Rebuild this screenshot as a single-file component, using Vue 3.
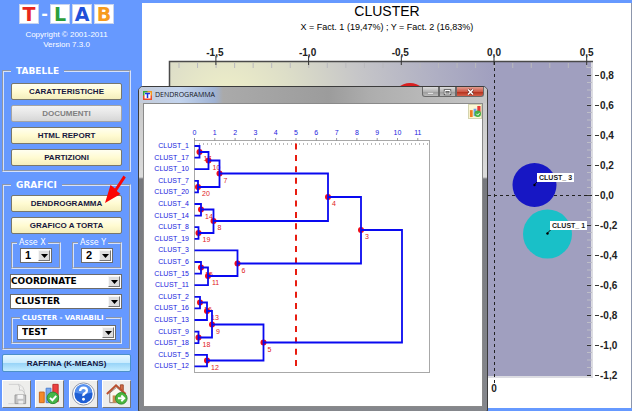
<script setup>
import { ref } from 'vue'

const tiles = [
  { c: 'T', k: 'red' },
  { c: 'L', k: 'green' },
  { c: 'A', k: 'blue' },
  { c: 'B', k: 'orange' }
]
const tables = ['CARATTERISTICHE', 'DOCUMENTI', 'HTML REPORT', 'PARTIZIONI']
const axisX = ref('1')
const axisY = ref('2')
const mode = ref('COORDINATE')
const kind = ref('CLUSTER')
const variable = ref('TEST')

// Scatter plot scales
const sx = (v) => 494 + v * 185.4
const sy = (v) => 195 - v * 150
const xTicks = [-1.5, -1, -0.5, 0, 0.5]
const yTicks = [0.8, 0.6, 0.4, 0.2, 0, -0.2, -0.4, -0.6, -0.8, -1, -1.2]
const fmt = (v) => v.toFixed(1).replace('.', ',')
const xMinor = Array.from({ length: 23 }, (_, i) => 179 + i * 18.54)
const yMinor = Array.from({ length: 41 }, (_, i) => 67.5 + i * 7.5)

// Dendrogram
const leaves = [1, 17, 10, 7, 20, 4, 14, 8, 19, 3, 6, 15, 11, 2, 16, 13, 9, 18, 5, 12]
const ly = (i) => 146 + i * 11.6
const dx = (v) => 194.5 + v * 20.3
const x0 = 194.5
// [label, x, y, top branch x, top branch y, bottom branch x, bottom branch y]
const nodes = [
  [17, 199.5, 152, x0, ly(0), x0, ly(1)],
  [10, 208.5, 160.5, 199.5, 152, x0, ly(2)],
  [20, 198, 187, x0, ly(3), x0, ly(4)],
  [7, 219.5, 173.5, 208.5, 160.5, 198, 187],
  [14, 201, 209.5, x0, ly(5), x0, ly(6)],
  [19, 198.5, 233, x0, ly(7), x0, ly(8)],
  [8, 213.5, 221, 201, 209.5, 198.5, 233],
  [4, 328, 197, 219.5, 173.5, 213.5, 221],
  [15, 201, 267.5, x0, ly(10), x0, ly(11)],
  [11, 208, 276, 201, 267.5, x0, ly(12)],
  [6, 237.5, 263.5, x0, ly(9), 208, 276],
  [3, 361, 230, 328, 197, 237.5, 263.5],
  [16, 200, 302.5, x0, ly(13), x0, ly(14)],
  [13, 207, 311, 200, 302.5, x0, ly(15)],
  [18, 198.5, 337.5, x0, ly(16), x0, ly(17)],
  [9, 212, 324.5, 207, 311, 198.5, 337.5],
  [12, 207, 360.5, x0, ly(18), x0, ly(19)],
  [5, 263.5, 342.5, 212, 324.5, 207, 360.5],
  [2, 402, 286, 361, 230, 263.5, 342.5]
]
const path = (n) => `M${n[3]} ${n[4]}H${n[1]}V${n[6]}H${n[5]}`
</script>

<template>
  <div class="app">
    <aside class="side">
      <header class="brand">
        <div class="logo">
          <template v-for="(t, i) in tiles" :key="t.c">
            <span class="tile" :class="t.k">{{ t.c }}</span>
            <span v-if="i === 0" class="dash">-</span>
          </template>
        </div>
        <p>Copyright © 2001-2011</p>
        <p>Version 7.3.0</p>
      </header>

      <fieldset class="group">
        <legend>TABELLE</legend>
        <button v-for="t in tables" :key="t" type="button" class="btn" :disabled="t === 'DOCUMENTI'">{{ t }}</button>
      </fieldset>

      <fieldset class="group charts">
        <legend>GRAFICI</legend>
        <button type="button" class="btn">
          DENDROGRAMMA
          <svg class="pointer" viewBox="0 0 22 29" aria-hidden="true">
            <path d="M19.500 0.500L11 13.500L6.500 10L1 28L16.500 19L12.800 16L21.800 2.500Z" fill="#fb0505" />
          </svg>
        </button>
        <button type="button" class="btn">GRAFICO A TORTA</button>
        <div class="axes">
          <fieldset class="mini">
            <legend><label for="ax">Asse X</label></legend>
            <div class="pick big">
              <select id="ax" v-model="axisX"><option>1</option><option>2</option></select>
              <span class="drop"><svg viewBox="0 0 7 4"><path d="M0 0h7L3.500 4z" /></svg></span>
            </div>
          </fieldset>
          <fieldset class="mini">
            <legend><label for="ay">Asse Y</label></legend>
            <div class="pick big">
              <select id="ay" v-model="axisY"><option>1</option><option>2</option></select>
              <span class="drop"><svg viewBox="0 0 7 4"><path d="M0 0h7L3.500 4z" /></svg></span>
            </div>
          </fieldset>
        </div>
        <div class="pick wide tight">
          <select v-model="mode" aria-label="Coordinate"><option>COORDINATE</option></select>
          <span class="drop"><svg viewBox="0 0 7 4"><path d="M0 0h7L3.500 4z" /></svg></span>
        </div>
        <div class="pick wide">
          <select v-model="kind" aria-label="Cluster"><option>CLUSTER</option></select>
          <span class="drop"><svg viewBox="0 0 7 4"><path d="M0 0h7L3.500 4z" /></svg></span>
        </div>
        <fieldset class="mini vars">
          <legend><label for="va">CLUSTER - VARIABILI</label></legend>
          <div class="pick">
            <select id="va" v-model="variable"><option>TEST</option></select>
            <span class="drop"><svg viewBox="0 0 7 4"><path d="M0 0h7L3.500 4z" /></svg></span>
          </div>
        </fieldset>
      </fieldset>

      <button type="button" class="btn refine">RAFFINA (K-MEANS)</button>

      <nav class="tools">
        <button type="button" class="tool" aria-label="Salva" disabled>
          <svg viewBox="0 0 28 27">
            <path d="M6 3.500h10q6 1 6.500 10M5.500 23.500h7" fill="none" stroke="#d0d0d0" />
            <path d="M16 3.500q2 3 1 6q4-1 5.500 4" fill="#f8f8f8" stroke="#c4c4c4" />
            <path d="M12.500 14.500h11v9h-11z" fill="#c4c4c4" stroke="#999" />
            <path d="M15 14.500h6v4h-6z" fill="#f4f4f4" /><path d="M16 20.500h5v3h-5z" fill="#eee" />
          </svg>
        </button>
        <button type="button" class="tool" aria-label="Grafico">
          <svg viewBox="0 0 28 27">
            <path d="M3.500 11.500h5v11h-5z" fill="#f58a2a" stroke="#c8641a" />
            <path d="M10.500 7.500h5v15h-5z" fill="#7aaaf0" stroke="#4c7fd0" />
            <path d="M17.500 3.500h5.500v18h-5.500z" fill="#ec4040" stroke="#bd2b2b" />
            <circle cx="17.500" cy="17.500" r="6" fill="#45b648" stroke="#2a8c30" />
            <path d="M14.500 17.500l2.500 2.500L21 15.500" fill="none" stroke="#fff" stroke-width="2" />
          </svg>
        </button>
        <button type="button" class="tool" aria-label="Aiuto">
          <svg viewBox="0 0 28 27">
            <circle cx="14" cy="13.500" r="11.500" fill="#fff" stroke="#8a94a8" />
            <circle cx="14" cy="13.500" r="9.500" fill="#1f5fd4" />
            <path d="M5 12a9 9 0 0 1 18 0q-9 3-18 0" fill="#5590ee" />
            <path d="M10.500 10.500q0-3.500 3.500-3.500t3.500 3q0 1.500-2 2.700t-1.500 2.800" fill="none" stroke="#fff" stroke-width="2.400" />
            <circle cx="14" cy="19" r="1.500" fill="#fff" />
          </svg>
        </button>
        <button type="button" class="tool" aria-label="Home">
          <svg viewBox="0 0 28 27">
            <path d="M18 4h3v6h-3z" fill="#d46e48" stroke="#9c4a2e" />
            <path d="M7 12.500v10h14v-10l-7-6z" fill="#fdf8f0" stroke="#8b7a70" />
            <path d="M4 13.500L13.500 4.500L23.500 13.500" fill="none" stroke="#b9502f" stroke-width="2" />
            <path d="M10 15h4v7.500h-4z" fill="#c98a50" />
            <circle cx="19" cy="18" r="6" fill="#4cb83f" stroke="#2b8a28" />
            <path d="M15.500 18h6M19 15l3 3l-3 3" fill="none" stroke="#fff" stroke-width="2" />
          </svg>
        </button>
      </nav>
    </aside>

    <main class="main">
      <svg class="scatter" viewBox="142 3 489 404" role="img" aria-label="Cluster">
        <defs>
          <radialGradient id="bg" gradientUnits="userSpaceOnUse" cx="226" cy="105" r="270">
            <stop offset="0" stop-color="#f1f1c8" />
            <stop offset="0.250" stop-color="#dddec8" />
            <stop offset="0.500" stop-color="#c6c6c8" />
            <stop offset="0.800" stop-color="#aeaec3" />
            <stop offset="1" stop-color="#a09fbf" />
          </radialGradient>
        </defs>
        <text x="387" y="16" class="title">CLUSTER</text>
        <text x="387" y="30" class="sub">X = Fact. 1 (19,47%) ; Y = Fact. 2 (16,83%)</text>
        <rect x="169" y="61" width="424" height="317" fill="url(#bg)" />
        <path d="M592 62v315H484" fill="none" stroke="#dcdce2" stroke-width="2" />
        <path d="M169.500 378V61.500H593" fill="none" stroke="#4a4a4a" stroke-width="1.500" />
        <path v-for="x in xMinor" :key="x" :d="`M${x} 63v5`" stroke="#b9b9bd" />
        <path v-for="y in yMinor" :key="y" :d="`M587 ${y}h5`" stroke="#bdbdc6" />
        <g v-for="x in xTicks" :key="x">
          <path :d="`M${sx(x)} 56v9`" stroke="#333" />
          <text :x="sx(x) - (x < 0 ? 1 : 0)" y="56" class="tick mid">{{ fmt(x) }}</text>
        </g>
        <g v-for="y in yTicks" :key="y">
          <path :d="`M587 ${sy(y) + 0.5}h4M595 ${sy(y) + 0.5}h4`" stroke="#333" />
          <text x="600" :y="sy(y) + 4" class="tick">{{ fmt(y) }}</text>
        </g>
        <path d="M494.500 62V383" stroke="#222" stroke-dasharray="3 3" />
        <path d="M488 195.500h104" stroke="#222" stroke-dasharray="3 3" />
        <text x="494" y="392" class="tick mid">0</text>
        <circle cx="410" cy="100" r="17" fill="#d81f1f" />
        <circle cx="534.500" cy="185" r="22" fill="#1717c4" />
        <circle cx="547.500" cy="234" r="24.500" fill="#19c0c8" />
        <path d="M534 185l5-5M547 233.500l5-5" stroke="#111" />
        <circle cx="534.500" cy="185" r="1.200" /><circle cx="547.500" cy="233.500" r="1.200" />
        <rect x="537" y="173" width="37" height="9" fill="#fff" />
        <text x="539" y="180" class="point">CLUST_ 3</text>
        <rect x="550" y="221" width="37" height="9" fill="#fff" />
        <text x="552" y="228" class="point">CLUST_ 1</text>
      </svg>
    </main>

    <section class="window" aria-label="DENDROGRAMMA">
      <header class="bar">
        <svg class="mark" viewBox="0 0 9 9" aria-hidden="true">
          <path d="M0 0h5v5H0z" fill="#36a93c" /><path d="M4.500 0H9v5H4.500z" fill="#f59a22" />
          <path d="M0 4.500h5V9H0z" fill="#e8452a" /><path d="M4.500 4.500H9V9H4.500z" fill="#ef4f2b" />
          <path d="M1.500 1.500h6v6h-6z" fill="#fff" /><path d="M2 2.500h5M4.500 2v5" stroke="#1b2fe0" stroke-width="1.500" />
        </svg>
        <h2>DENDROGRAMMA</h2>
        <div class="ctl">
          <button type="button" class="min" aria-label="Riduci"><svg viewBox="0 0 9 8"><path d="M1.500 4.500h6v1.500h-6z" fill="#fff" stroke="#888" stroke-width=".5" /></svg></button>
          <button type="button" class="max" aria-label="Ingrandisci"><svg viewBox="0 0 9 8"><path d="M2 2.500h5v3.500H2z" fill="none" stroke="#555" stroke-width="2.400" /><path d="M2 2.500h5v3.500H2z" fill="none" stroke="#fff" /></svg></button>
          <button type="button" class="close" aria-label="Chiudi"><svg viewBox="0 0 9 8"><path d="M2 1.500l5 5M7 1.500l-5 5" stroke="#6b2a22" stroke-width="2.800" /><path d="M2 1.500l5 5M7 1.500l-5 5" stroke="#fff" stroke-width="1.600" /></svg></button>
        </div>
      </header>
      <div class="body">
        <div class="strip">
          <button type="button" class="mini-tool" aria-label="Opzioni grafico">
            <svg viewBox="0 0 13 14">
              <path d="M1 5.500h3v7.500h-3z" fill="#f07c22" /><path d="M5 4h3v8H5z" fill="#6f9fe8" /><path d="M9 1h3.500v9H9z" fill="#e63a35" />
              <circle cx="9.500" cy="9.500" r="3.500" fill="#45b043" /><path d="M8 9.500l1.500 1.500l2-2.500" fill="none" stroke="#fff" />
            </svg>
          </button>
        </div>
        <svg class="tree" viewBox="144 119 338 287" role="img" aria-label="Dendrogramma">
          <rect x="194.500" y="140.500" width="235" height="232" fill="#fff" stroke="#a8a8a8" />
          <path d="M199 144h229" stroke="#bbb" stroke-dasharray="1 3" stroke-width="2" />
          <g v-for="(n, i) in 12" :key="n">
            <path :d="`M${dx(i)} 138v3`" stroke="#999" />
            <text :x="dx(i)" y="135" class="num">{{ i }}</text>
          </g>
          <text v-for="(n, i) in leaves" :key="n" x="189" :y="ly(i) + 2" class="leaf">CLUST_{{ n }}</text>
          <path d="M296 143.500V368" stroke="#e81c10" stroke-width="2" stroke-dasharray="6 5.400" />
          <text v-for="n in nodes.slice(0, -1)" :key="n[0]" :x="n[1] + 4" :y="n[2] + 9" class="node">{{ n[0] }}</text>
          <circle v-for="n in nodes.slice(0, -1)" :key="n[0]" :cx="n[1]" :cy="n[2]" r="3" fill="#f00c18" />
          <path v-for="n in nodes" :key="n[0]" :d="path(n)" fill="none" stroke="#0909f0" stroke-width="1.800" />
        </svg>
      </div>
    </section>
  </div>
</template>

<style>
body {
  margin: 0;
  background: #6699ff;
}
</style>

<style scoped>
.app {
  position: relative;
  display: grid;
  grid-template-columns: 142px 1fr;
  min-height: 100vh;
  background: #6699ff;
  font-family: "Liberation Sans", Arial, sans-serif;
  overflow: hidden;
}
.app * {
  box-sizing: border-box;
}
.side {
  padding: 4px 11px 4px 2px;
}
.brand {
  height: 61px;
  color: #fff;
  font-size: 8px;
  line-height: 10px;
  text-align: center;
}
.brand p {
  margin: 0;
}
.logo {
  display: flex;
  justify-content: center;
  gap: 2px;
  margin-bottom: 6px;
}
.tile {
  width: 20px;
  height: 20px;
  background: #fff;
  border: 1px solid #c8d4ee;
  font: bold 19px/18px "DejaVu Sans", Verdana, sans-serif;
}
.dash {
  width: 7px;
  font: bold 16px/19px "DejaVu Sans", Verdana, sans-serif;
}
.red { color: #e8261c; }
.green { color: #2c9e3c; }
.blue { color: #1f4fd8; }
.orange { color: #f79a1c; }

fieldset {
  min-width: 0;
  margin: 0;
  border: 2px groove #d6e2fa;
}
.group {
  display: flex;
  flex-direction: column;
  gap: 5px;
  padding: 6px 7px 4px;
}
.group > legend {
  padding: 0 5px;
  color: #fff;
  font: bold 9px/12px "DejaVu Sans", Verdana, sans-serif;
}
.charts {
  margin-top: 7px;
  padding-top: 4px;
}
.btn {
  position: relative;
  width: 100%;
  height: 17px;
  padding: 0;
  border: 1px solid #77776c;
  border-radius: 2px;
  background: linear-gradient(#fffff0, #fffbd2 50%, #f4eebc);
  color: #17173f;
  font: bold 8px/15px "Liberation Sans", Arial, sans-serif;
}
.btn:disabled {
  border-color: #a4a4a4;
  background: linear-gradient(#f3f3f3, #e6e6e6 50%, #d6d6d6);
  color: #808080;
}
.pointer {
  position: absolute;
  right: -5px;
  bottom: 7px;
  width: 22px;
  height: 29px;
}
.axes {
  display: flex;
  justify-content: space-between;
}
.mini {
  width: 50px;
  padding: 1px 7px 4px;
}
.mini legend {
  margin-left: -3px;
  padding: 0 2px;
  color: #fff;
  font: 8px/8px "DejaVu Sans", Verdana, sans-serif;
  white-space: nowrap;
}
.pick {
  display: grid;
  grid-template-columns: 1fr 14px;
  height: 15px;
  border: 1px solid #6b6b6b;
  background: #fff;
}
.wide {
  margin-left: -1px;
}
.pick select {
  grid-area: 1 / 1 / 2 / 3;
  appearance: none;
  width: 100%;
  height: 13px;
  padding: 0 14px 0 4px;
  border: 0;
  background: transparent;
  color: #000;
  font: bold 9px/13px "DejaVu Sans", Verdana, sans-serif;
}
.pick.tight select {
  padding-left: 0;
}
.pick.big select {
  font: bold 11px/13px "Liberation Sans", Arial, sans-serif;
}
.drop {
  grid-area: 1 / 2 / 2 / 3;
  display: grid;
  place-items: center;
  margin: 1px;
  border: 1px solid;
  border-color: #f6f6f6 #777 #777 #f6f6f6;
  background: #dedede;
  pointer-events: none;
}
.drop svg {
  width: 7px;
  height: 4px;
}
.mini.vars {
  width: 100%;
  padding: 3px 4px 2px;
}
.vars legend {
  margin-left: 3px;
  font-weight: bold;
  font-size: 7px;
}
.refine {
  display: block;
  margin-top: 4px;
  height: 18px;
  border-color: #4c90c8;
  background: linear-gradient(#e8f8ff, #c8ecff 50%, #98d4f8 52%, #c2ecff);
}
.tools {
  display: flex;
  justify-content: space-between;
  margin-top: 8px;
}
.tool {
  width: 29px;
  height: 28px;
  padding: 0;
  border: 1px solid;
  border-color: #fff #777 #777 #fff;
  background: #eeeeec;
}
.tool svg,
.mini-tool svg,
.ctl svg,
.mark {
  display: block;
}
.tool svg {
  width: 100%;
  height: 100%;
}

.main {
  margin: 3px 0 4px;
  border-right: 1px solid #8c96ac;
  background: #fff;
}
.scatter {
  display: block;
  width: 100%;
}
.title {
  font-size: 14px;
  text-anchor: middle;
}
.sub {
  font-size: 9px;
  text-anchor: middle;
}
.tick {
  font-size: 10px;
  font-weight: bold;
  fill: #222;
}
.mid {
  text-anchor: middle;
}
.point {
  font-size: 7px;
  font-weight: bold;
  fill: #222;
}

.window {
  position: absolute;
  top: 86px;
  left: 138px;
  width: 350px;
  padding: 0 4px 4px;
  border: 1px solid #3c3c3c;
  border-radius: 5px 5px 2px 2px;
  background: linear-gradient(#c6c6c6, #dcdcdc 90px, #77797e 92px, #85878c);
}
.bar {
  display: flex;
  align-items: center;
  gap: 3px;
  height: 16px;
  margin: 0 -4px;
  padding-left: 4px;
  border-radius: 4px 4px 0 0;
  background: linear-gradient(90deg, #c4cbd8, #c3d4ee 40px, #9fb2d3 76px, #aaaaaa 84px, #9c9c9c 190px, #adadad 230px, #c6c6c6);
}
.mark {
  width: 9px;
  height: 9px;
}
.bar h2 {
  flex: 1;
  margin: 0;
  color: #14141c;
  font: 7px/14px "Open Sans", "Noto Sans", sans-serif;
}
.ctl {
  display: flex;
  align-self: flex-start;
  margin-right: 3px;
}
.ctl button {
  display: grid;
  place-items: center;
  width: 17px;
  height: 10px;
  padding: 0;
  border: 1px solid #6a6a6a;
  border-top: 0;
  background: linear-gradient(#dcdcdc, #b4b4b4 50%, #989898 52%, #bcbcbc);
}
.ctl .min {
  border-radius: 0 0 0 3px;
}
.ctl .close {
  width: 28px;
  border-radius: 0 0 3px 0;
  background: linear-gradient(#e09c90, #cf5a48 50%, #b02c18 52%, #d4604a);
}
.ctl svg {
  width: 9px;
  height: 8px;
}
.body {
  border: 1px solid #8a8a8a;
  background: #fff;
}
.strip {
  display: flex;
  justify-content: flex-end;
  height: 15px;
}
.mini-tool {
  width: 14px;
  height: 15px;
  padding: 0;
  border: 1px solid #d4d4b0;
  background: #fbf8d4;
}
.mini-tool svg {
  width: 100%;
  height: 100%;
}
.tree {
  display: block;
  width: 100%;
}
.num {
  font-size: 7px;
  text-anchor: middle;
  fill: #2222dd;
}
.leaf {
  font-size: 7px;
  text-anchor: end;
  fill: #2222dd;
}
.node {
  font-size: 7px;
  fill: #e01818;
}
</style>
